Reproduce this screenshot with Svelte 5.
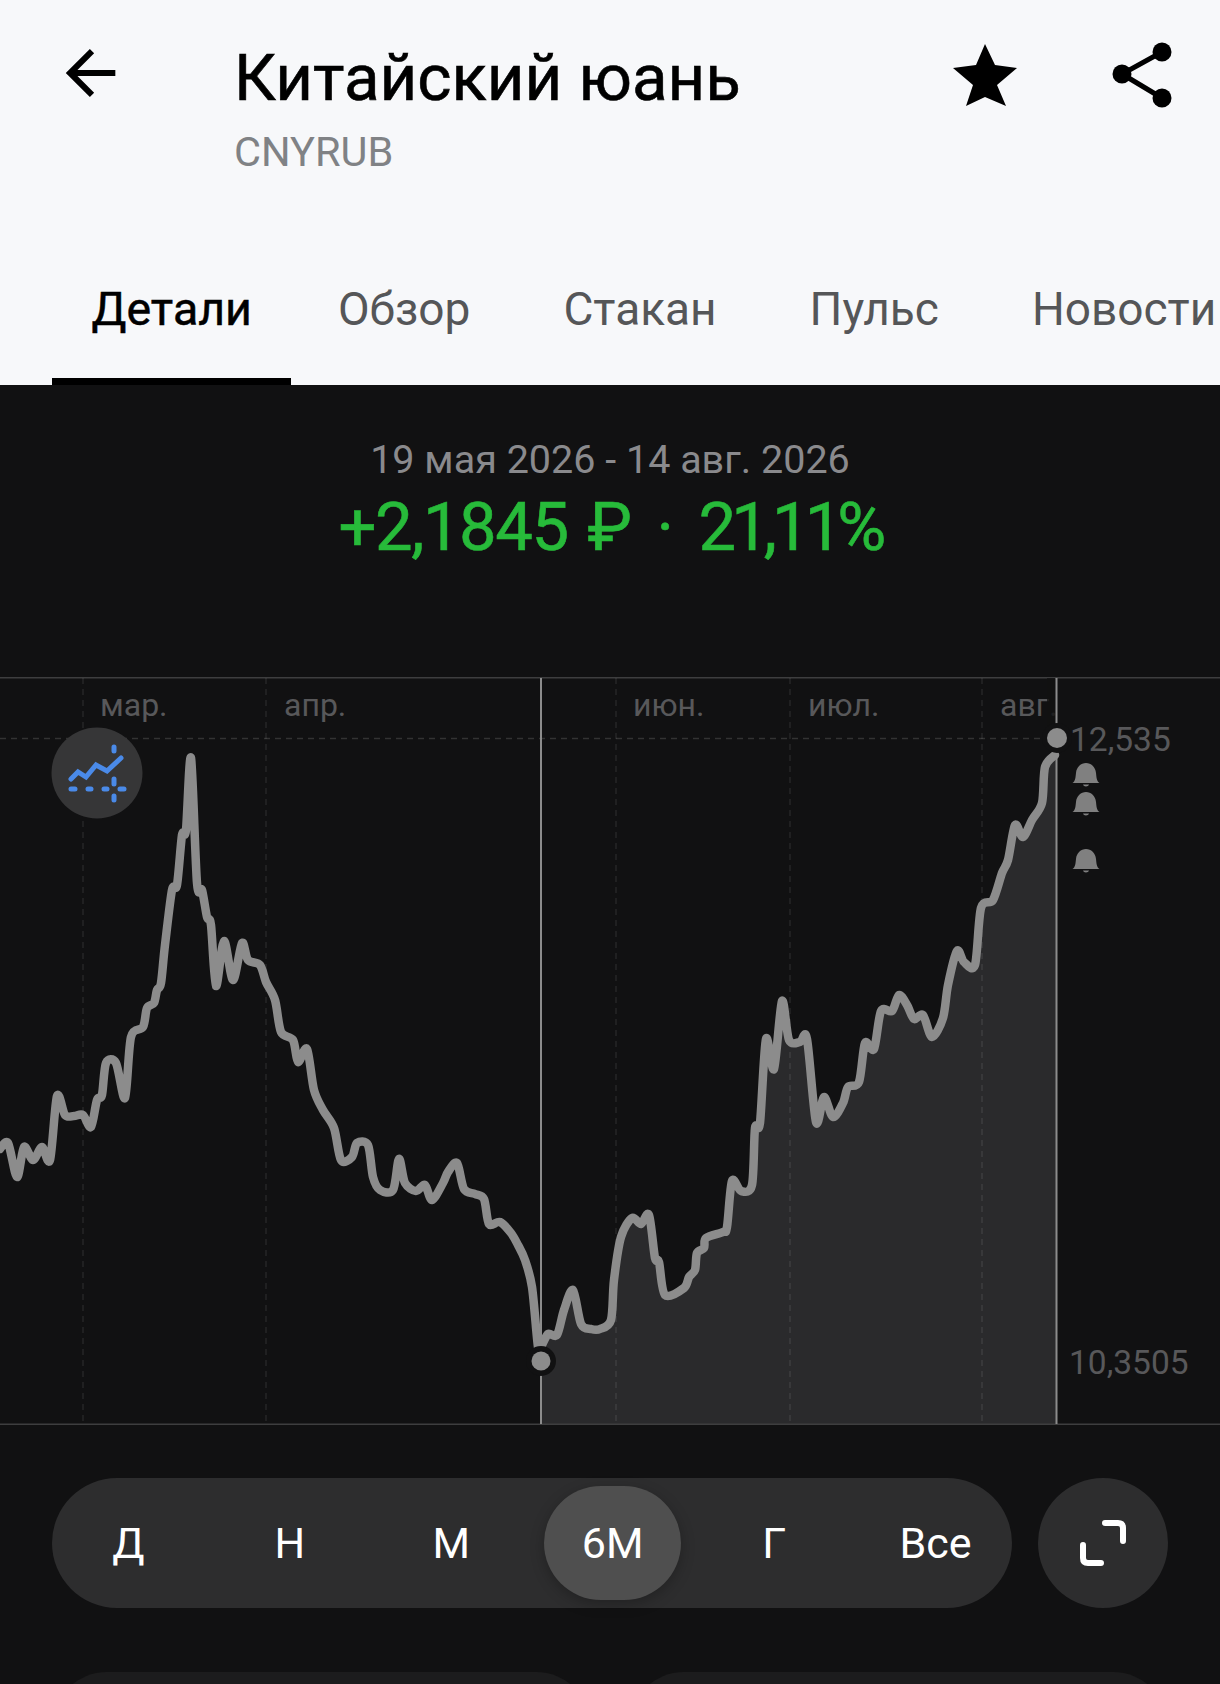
<script>
  const tabs = ['Детали', 'Обзор', 'Стакан', 'Пульс', 'Новости'];
  const periods = ['Д', 'Н', 'М', '6М', 'Г', 'Все'];
  const gridX = [83, 266, 616, 790, 982];
  const months = [
    { label: 'мар.', x: 100 },
    { label: 'апр.', x: 284 },
    { label: 'июн.', x: 633 },
    { label: 'июл.', x: 808 },
    { label: 'авг.', x: 1000 }
  ];
  const bells = [772, 801, 858];

  // chart top is y=677 on the page, points below are page coords
  const top = 677;
  const before = [
    [0,1149],[8,1140],[17,1180],[24,1144],[33,1163],[42,1144],[50,1163],[57,1093],[65,1115],[74,1119],[83,1112],[91,1130],[97,1100],[102,1095],[106,1063],[116,1063],[125,1101],[131,1037],[143,1027],[147,1008],[154,1003],[157,990],[161,983],[165,945],[172,890],[177,885],[182,835],[186,830],[191,755],[197,883],[202,890],[207,917],[211,925],[216,989],[224,938],[233,983],[242,940],[248,960],[260,965],[266,982],[275,1000],[281,1032],[293,1040],[298,1065],[307,1046],[314,1090],[323,1110],[334,1128],[341,1163],[352,1157],[357,1140],[368,1145],[373,1177],[380,1190],[393,1190],[399,1156],[405,1183],[416,1194],[425,1182],[432,1203],[443,1183],[448,1172],[457,1160],[464,1192],[475,1191],[484,1199],[489,1227],[500,1219],[511,1233],[518,1245],[525,1260],[532,1287],[538,1347]
  ];
  const after = [
    [541,1347],[548,1331],[557,1338],[564,1310],[573,1287],[581,1327],[591,1326],[600,1332],[611,1320],[614,1280],[621,1237],[632,1215],[641,1227],[649,1212],[655,1258],[659,1262],[665,1298],[684,1288],[689,1277],[695,1270],[697,1253],[704,1248],[706,1238],[723,1232],[727,1227],[732,1178],[741,1194],[752,1185],[755,1128],[760,1123],[766,1036],[774,1072],[782,998],[789,1040],[800,1045],[807,1036],[816,1125],[824,1094],[833,1120],[843,1103],[848,1087],[859,1082],[865,1040],[874,1052],[881,1008],[892,1014],[899,992],[907,1005],[914,1022],[923,1012],[932,1040],[943,1018],[948,985],[957,948],[964,962],[975,968],[981,908],[993,900],[1002,873],[1008,860],[1015,822],[1023,840],[1032,820],[1042,803],[1045,767],[1055,755]
  ];

  // the points were read off the outer edge of the stroke, pull the extremes back in
  function inset(pts) {
    return pts.map(([x, y], i) => {
      const a = pts[i - 1];
      const b = pts[i + 1];
      if (!a || !b) return [x, y - top];
      if (y < a[1] && y < b[1]) return [x, y - top + 3];
      if (y > a[1] && y > b[1]) return [x, y - top - 3];
      return [x, y - top];
    });
  }

  // catmull-rom to bezier, small tension so the peaks stay narrow
  function smooth(pts) {
    let d = 'M' + pts[0][0] + ' ' + pts[0][1];
    for (let i = 0; i < pts.length - 1; i++) {
      const p0 = pts[i - 1] || pts[i];
      const p1 = pts[i];
      const p2 = pts[i + 1];
      const p3 = pts[i + 2] || p2;
      const k = 0.15;
      const c1x = (p1[0] + (p2[0] - p0[0]) * k).toFixed(1);
      const c1y = (p1[1] + (p2[1] - p0[1]) * k).toFixed(1);
      const c2x = (p2[0] - (p3[0] - p1[0]) * k).toFixed(1);
      const c2y = (p2[1] - (p3[1] - p1[1]) * k).toFixed(1);
      d += ` C${c1x} ${c1y} ${c2x} ${c2y} ${p2[0]} ${p2[1]}`;
    }
    return d;
  }

  const line = smooth(inset(before.concat(after)));
  const area = smooth(inset(after)) + ' L1057 61 V747 H541 Z';
</script>

<div class="page">
  <header class="head">
    <div class="topbar">
      <svg class="back" width="56" height="56" viewBox="0 0 56 60" fill="none" stroke="#000" stroke-width="6.500">
        <path d="M6 30 H53" />
        <path d="M28 6.500 L4.500 30 L28 53.500" />
      </svg>
      <div class="titles">
        <h1>Китайский юань</h1>
        <div class="ticker">CNYRUB</div>
      </div>
      <svg class="star" width="64" height="62" viewBox="0 0 64 62" fill="#000">
        <path d="M32 0 L42 21 L64 24 L44 41 L53 62 L32 53 L13 62 L20 41 L0 24 L23 21 Z" />
      </svg>
      <svg class="share" width="60" height="66" viewBox="0 0 60 66" fill="#000">
        <circle cx="50" cy="10" r="9.500" />
        <circle cx="10" cy="32" r="9.500" />
        <circle cx="50" cy="56" r="9.500" />
        <path d="M50 10 L10 32 L50 56" fill="none" stroke="#000" stroke-width="5" />
      </svg>
    </div>
    <nav class="tabs">
      {#each tabs as tab, i}
        <div class="tab" class:active={i === 0}>{tab}</div>
      {/each}
    </nav>
  </header>

  <main class="dark">
    <div class="range">19 мая 2026 - 14 авг. 2026</div>
    <div class="change">
      <span>+2,1845</span>
      <span class="cur">₽</span>
      <span class="dot">·</span>
      <span class="pct">21,11%</span>
    </div>

    <div class="chart">
      <svg width="1220" height="748" viewBox="0 0 1220 748">
        <path d={area} fill="#2a2a2c" />
        <path d="M0 0.5 H1220 M0 747.5 H1220" stroke="#3e3e3f" stroke-width="2" />
        <path d="M0 61.5 H1057" stroke="#333" stroke-width="1.500" stroke-dasharray="6 5" />
        {#each gridX as x}
          <path d="M{x} 1 V747" stroke="rgba(255,255,255,0.09)" stroke-width="1.500" stroke-dasharray="6 5" />
        {/each}
        <path d="M541 1 V747 M1056.500 1 V747" stroke="#8c8c8c" stroke-width="2" />
        {#each months as m}
          <text x={m.x} y="39" class="axis">{m.label}</text>
        {/each}
        <rect x="1047" y="1" width="8" height="50" fill="#111112" opacity="0.8" />
        <path d={line} fill="none" stroke="#8c8c8c" stroke-width="8.500" stroke-linejoin="round" stroke-linecap="round" />
        <circle cx="541" cy="684" r="15" fill="#111112" />
        <circle cx="541" cy="684" r="9.500" fill="#8c8c8c" />
        <circle cx="1057" cy="61" r="15" fill="#111112" />
        <circle cx="1057" cy="61" r="10" fill="#8c8c8c" />
        <text x="1070" y="74" class="price">12,535</text>
        <text x="1069" y="697" class="price">10,3505</text>
        {#each bells as y}
          <path transform="translate(1086 {y - top})" d="M-13.500 11 C-10.500 9 -10.500 5 -10 1 C-9.500 -5 -5 -9 0 -9 C5 -9 9.500 -5 10 1 C10.500 5 10.500 9 13.500 11 Z M-3 12.500 H3 C2.500 15 -2.500 15 -3 12.500 Z" fill="#808080" />
        {/each}
        <circle cx="97" cy="96" r="45.500" fill="#363637" />
        <g fill="none" stroke="#4a8ae8" stroke-linecap="round">
          <path d="M71 102 L78 95 L86 100 L96 88 L107 94 L121 81" stroke-width="5" />
          <path d="M71 112 H75 M88 112 H91 M104 112 H107 M120 112 H124 M114 70 V74 M114 102 V107 M114 119 V123" stroke-width="5" />
        </g>
      </svg>
    </div>

    <div class="controls">
      <div class="pill">
        {#each periods as p}
          <div class="period" class:on={p === '6М'}>{p}</div>
        {/each}
      </div>
      <div class="expand">
        <svg width="50" height="50" viewBox="0 0 50 50" fill="none" stroke="#fff" stroke-width="6" stroke-linecap="round" stroke-linejoin="round">
          <path d="M27 5 H40 Q45 5 45 10 V23" />
          <path d="M5 27 V40 Q5 45 10 45 H23" />
        </svg>
      </div>
    </div>

    <div class="cards">
      <div class="card"></div>
      <div class="card"></div>
    </div>
  </main>
</div>

<style>
  :global(body) {
    margin: 0;
    background: #111112;
  }

  .page {
    width: 1220px;
    height: 1684px;
    overflow: hidden;
    font-family: Roboto, "Noto Sans", sans-serif;
  }

  .head {
    height: 385px;
    background: #f7f8fa;
    box-sizing: border-box;
    padding-top: 40px;
  }

  .topbar {
    display: flex;
    align-items: flex-start;
    height: 230px;
  }

  .back {
    margin: 5px 0 0 64px;
  }

  .titles {
    margin-left: 114px;
    flex: 1;
  }

  h1 {
    margin: 0;
    font-size: 65.400px;
    line-height: 76px;
    font-weight: 400;
    -webkit-text-stroke: 0.6px #000;
    color: #000;
  }

  .ticker {
    margin-top: 13px;
    font-size: 41.500px;
    line-height: 46px;
    color: #808285;
  }

  .star {
    margin-top: 4px;
  }

  .share {
    margin: 2px 48px 0 95px;
  }

  .tabs {
    display: flex;
    height: 115px;
    padding-left: 52px;
    white-space: nowrap;
  }

  .tab {
    box-sizing: border-box;
    height: 115px;
    padding: 0 46.500px;
    font-size: 46px;
    line-height: 78px;
    color: #555658;
  }

  .tab.active {
    padding: 0 39.500px;
    font-size: 46.500px;
    color: #000;
    -webkit-text-stroke: 0.5px #000;
    border-bottom: 7px solid #000;
  }

  .dark {
    background: #111112;
    height: 1299px;
    text-align: center;
  }

  .range {
    padding-top: 52px;
    font-size: 39.500px;
    line-height: 46px;
    color: #8a8a8d;
  }

  .change {
    margin-top: 5px;
    height: 76px;
    display: flex;
    justify-content: center;
    font-size: 67px;
    line-height: 78px;
    -webkit-text-stroke: 0.6px #27bb3a;
    letter-spacing: -1.500px;
    color: #27bb3a;
  }

  .cur {
    margin-left: 20px;
  }

  .dot {
    margin-left: 26px;
  }

  .pct {
    margin-left: 26px;
    letter-spacing: -5px;
  }

  .chart {
    margin-top: 113px;
    height: 748px;
  }

  .chart svg {
    display: block;
  }

  .axis {
    font-size: 32px;
    fill: #58585a;
  }

  .price {
    font-size: 33.500px;
    fill: #58585a;
  }

  .controls {
    display: flex;
    gap: 26px;
    padding: 53px 52px 0;
  }

  .pill {
    box-sizing: border-box;
    width: 960px;
    height: 130px;
    padding: 8px;
    display: grid;
    grid-template-columns: repeat(6, 1fr);
    column-gap: 24.400px;
    border-radius: 65px;
    background: #2d2d2e;
  }

  .period {
    display: flex;
    align-items: center;
    justify-content: center;
    border-radius: 57px;
    font-size: 43px;
    color: #fff;
  }

  .period.on {
    background: #4f4f4f;
    box-shadow: 0 4px 14px rgba(0, 0, 0, 0.25);
  }

  .expand {
    width: 130px;
    height: 130px;
    display: flex;
    align-items: center;
    justify-content: center;
    border-radius: 50%;
    background: #2d2d2e;
  }

  .cards {
    display: flex;
    gap: 38px;
    padding: 64px 52px 0;
  }

  .card {
    flex: 1;
    height: 100px;
    border-radius: 55px 55px 0 0;
    background: #1c1c1d;
  }
</style>
